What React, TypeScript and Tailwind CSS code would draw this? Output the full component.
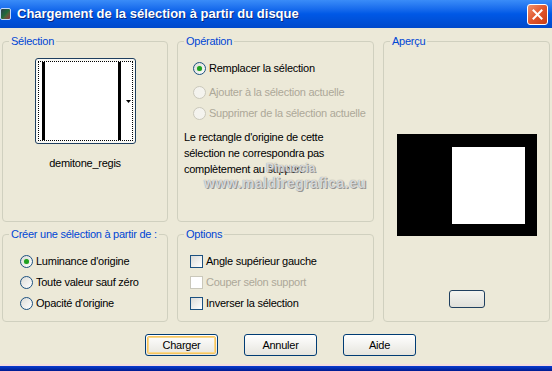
import React from "react";

const font = { fontFamily: '"Liberation Sans", Arial, sans-serif' };
const T = "text-[11px] tracking-[-0.25px]";

function Group({ label, className, children }: { label: string; className?: string; children?: React.ReactNode }) {
  return (
    <fieldset className={"border border-[#D0D0BF] rounded-[4px] px-0 pb-0 min-w-0 " + (className ?? "")}>
      <legend className={"ml-[6px] px-[2px] leading-[14px] whitespace-nowrap text-[#0046D5] " + T}>{label}</legend>
      {children}
    </fieldset>
  );
}

function Radio({ checked, disabled, label }: { checked?: boolean; disabled?: boolean; label: string }) {
  return (
    <div className="flex items-center gap-[3px] h-[21px] whitespace-nowrap">
      <span
        className={
          "w-[13px] h-[13px] shrink-0 rounded-full border flex items-center justify-center " +
          (disabled ? "border-[#CAC8BB] bg-[#F4F3EE]" : "border-[#1C5180] bg-gradient-to-br from-[#DCDCD7] to-white")
        }
      >
        {checked && <span className="w-[5px] h-[5px] rounded-full bg-[#21A121] shadow-[0_0_1px_#7BD17B]" />}
      </span>
      <span className={T + " " + (disabled ? "text-[#ACA899]" : "text-black")}>{label}</span>
    </div>
  );
}

function Check({ disabled, label }: { disabled?: boolean; label: string }) {
  return (
    <div className="flex items-center gap-[3px] h-[21px] whitespace-nowrap">
      <span
        className={
          "w-[13px] h-[13px] shrink-0 border " +
          (disabled ? "border-[#CAC8BB] bg-white" : "border-[#1C5180] bg-gradient-to-br from-[#DCDCD7] to-white")
        }
      />
      <span className={T + " " + (disabled ? "text-[#ACA899]" : "text-black")}>{label}</span>
    </div>
  );
}

function Btn({ label, def }: { label: string; def?: boolean }) {
  return (
    <div className="w-[73px] h-[22px] rounded-[3px] border border-[#003C74] bg-gradient-to-b from-white to-[#E6E5DE] p-[1px]">
      <div
        className={
          "w-full h-full rounded-[2px] flex items-center justify-center text-black " +
          T +
          (def ? " border border-[#F5C460] shadow-[inset_0_0_0_1px_#FBD88A]" : "")
        }
      >
        {label}
      </div>
    </div>
  );
}

export default function App() {
  return (
    <div className="w-[552px] h-[371px] flex flex-col bg-[#ECE9D8] overflow-hidden" style={font}>
      {/* Title bar */}
      <div className="h-[28px] shrink-0 flex items-center bg-gradient-to-b from-[#3A8CF8] via-[#0058E6] to-[#0049CB] relative">
        <div className="w-[11px] h-[12px] ml-0 mr-[6px] rounded-[2px] bg-gradient-to-br from-[#2B3A4A] via-[#1E6B3A] to-[#8A2B3B] border border-[#C0D8F8]" />
        <span className="text-white font-bold text-[13px] [text-shadow:1px_1px_0_#0A2A80]">
          Chargement de la sélection à partir du disque
        </span>
        <div className="ml-auto mr-[4px] w-[21px] h-[21px] rounded-[3px] border border-white bg-gradient-to-br from-[#F0906A] via-[#E0552C] to-[#C83C14] flex items-center justify-center">
          <svg width="11" height="11" viewBox="0 0 11 11">
            <path d="M1.5 1.5 L9.5 9.5 M9.5 1.5 L1.5 9.5" stroke="white" strokeWidth="2" strokeLinecap="square" />
          </svg>
        </div>
      </div>

      {/* Content */}
      <div className="flex-1 flex flex-col px-[2px] pt-[6px] relative">
        <div className="flex gap-[9px]">
          <div className="w-[166px] flex flex-col gap-[5px]">
            <Group label="Sélection" className="h-[188px]">
              <div className="flex flex-col items-center">
                <div className="mt-[10px] w-[101px] h-[86px] rounded-[3px] border border-[#1F3F5F] bg-[#F8F8F4] p-[2px]">
                  <div className="w-full h-full border border-dotted border-black bg-white relative flex">
                    <div className="ml-[3px] w-[3px] h-full bg-black" />
                    <div className="ml-[73px] w-[3px] h-full bg-black" />
                    <svg className="absolute right-[1px] top-[38px]" width="5" height="4" viewBox="0 0 5 4">
                      <path d="M0 0 L5 0 L2.5 3 Z" fill="black" />
                    </svg>
                  </div>
                </div>
                <div className={"mt-[11px] text-black " + T}>demitone_regis</div>
              </div>
            </Group>
            <Group label="Créer une sélection à partir de :" className="h-[95px]">
              <div className="pl-[17px] pt-[10px] flex flex-col">
                <Radio checked label="Luminance d'origine" />
                <Radio label="Toute valeur sauf zéro" />
                <Radio label="Opacité d'origine" />
              </div>
            </Group>
          </div>

          <div className="w-[197px] flex flex-col gap-[5px]">
            <Group label="Opération" className="h-[188px]">
              <div className="pl-[15px] pt-[10px] flex flex-col">
                <Radio checked label="Remplacer la sélection" />
                <div className="h-[3px]" />
                <Radio disabled label="Ajouter à la sélection actuelle" />
                <Radio disabled label="Supprimer de la sélection actuelle" />
              </div>
              <div className={"pl-[6px] mt-[5px] leading-[16px] text-black " + T}>
                Le rectangle d'origine de cette
                <br />
                sélection ne correspondra pas
                <br />
                complètement au support
              </div>
            </Group>
            <Group label="Options" className="h-[95px]">
              <div className="pl-[12px] pt-[10px] flex flex-col">
                <Check label="Angle supérieur gauche" />
                <Check disabled label="Couper selon support" />
                <Check label="Inverser la sélection" />
              </div>
            </Group>
          </div>

          <div className="w-[167px]">
            <Group label="Aperçu" className="h-[288px]">
              <div className="flex flex-col items-center">
                <div className="mt-[86px] w-[140px] h-[102px] bg-black flex items-start justify-end pt-[13px] pr-[12px]">
                  <div className="w-[73px] h-[77px] bg-white" />
                </div>
                <div className="mt-[54px] w-[36px] h-[18px] rounded-[3px] border border-[#1F3F5F] bg-gradient-to-b from-[#F4F4F0] to-[#E0E0DA]" />
              </div>
            </Group>
          </div>
        </div>

        <div className="flex pl-[143px] gap-[26px] mt-[12px]">
          <Btn label="Charger" def />
          <Btn label="Annuler" />
          <Btn label="Aide" />
        </div>

        {/* watermark */}
        <div className="absolute left-[266px] top-[131px] text-[12px] font-bold text-white/70 [text-shadow:0_0_1px_#777,1px_1px_0_#999]">
          Pinuccia
        </div>
        <div className="absolute left-[204px] top-[145px] text-[14px] font-bold tracking-[0.5px] text-white/70 [text-shadow:0_0_1px_#777,1px_1px_0_#999]">
          www.maldiregrafica.eu
        </div>
      </div>

      <div className="h-[2px] bg-[#F3DCE0] shrink-0" />
      <div className="h-[5px] shrink-0 bg-gradient-to-b from-[#0A3CD0] to-[#001A90]" />
    </div>
  );
}
